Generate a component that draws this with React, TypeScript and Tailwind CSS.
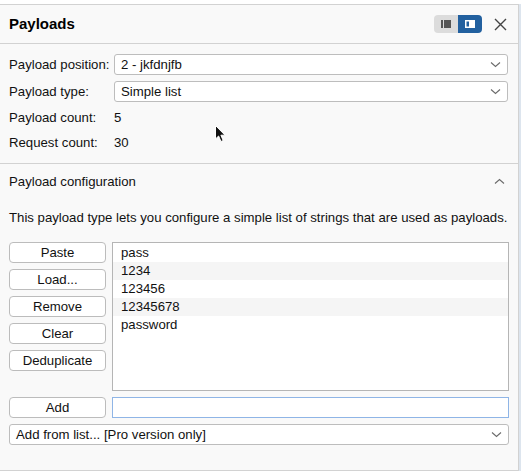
import React from 'react'

const font = "font-['Liberation_Sans',Arial,sans-serif]"

function Chevron({ up = false }: { up?: boolean }) {
  return (
    <svg width="11" height="7" viewBox="0 0 11 7" className={up ? 'rotate-180' : ''}>
      <path d="M1 1.5 L5.5 5.5 L10 1.5" fill="none" stroke="#6b6b6b" strokeWidth="1.1" />
    </svg>
  )
}

function Select({ value, className = '' }: { value: string; className?: string }) {
  return (
    <div className={`flex h-[21px] items-center justify-between rounded-[3px] border border-[#bdbdbd] bg-white pl-[6px] pr-[6px] ${className}`}>
      <span>{value}</span>
      <Chevron />
    </div>
  )
}

function Btn({ label }: { label: string }) {
  return (
    <button className="flex h-[21px] w-[97px] items-center justify-center rounded-[4px] border border-[#bcbcbc] bg-white text-[13.2px] text-[#111]">
      {label}
    </button>
  )
}

export default function App() {
  const items = ['pass', '1234', '123456', '12345678', 'password']

  return (
    <div className={`relative h-[473px] w-[521px] overflow-hidden bg-white pt-[4px] text-[13.2px] text-[#111] ${font}`}>
      <div className="flex h-[467px]">
        <div className="flex w-[519px] flex-col border-t border-r border-b border-[#d2d2d2] bg-[#f9f9f9]">
          {/* header */}
          <div className="flex h-[39px] items-center justify-between border-b border-[#d2d2d2] pl-[9px] pr-[11px]">
            <h1 className="text-[15px] font-bold text-black">Payloads</h1>
            <div className="flex items-center gap-[12px]">
              <div className="flex h-[18px] overflow-hidden rounded-[4px]">
                <div className="flex w-[24px] items-center justify-center bg-[#dcdcdc]">
                  <svg width="10" height="8" viewBox="0 0 10 8">
                    <rect x="0" y="0" width="2" height="8" fill="#555" />
                    <rect x="3" y="0" width="7" height="8" fill="#555" />
                  </svg>
                </div>
                <div className="flex w-[24px] items-center justify-center bg-[#22609f]">
                  <svg width="10" height="8" viewBox="0 0 10 8">
                    <rect x="0.75" y="0.75" width="8.5" height="6.5" fill="none" stroke="#fff" strokeWidth="1.5" />
                    <rect x="4" y="0" width="6" height="8" fill="#fff" />
                  </svg>
                </div>
              </div>
              <svg width="13" height="13" viewBox="0 0 13 13">
                <path d="M1 1 L12 12 M12 1 L1 12" stroke="#444" strokeWidth="1.4" />
              </svg>
            </div>
          </div>

          {/* positions */}
          <div className="flex flex-col border-b border-[#d2d2d2] px-[9px] pt-[10px] pb-[10px]">
            <div className="flex h-[21px] items-center">
              <span className="w-[105px]">Payload position:</span>
              <Select value="2 - jkfdnjfb" className="w-[394px]" />
            </div>
            <div className="mt-[6px] flex h-[21px] items-center">
              <span className="w-[105px]">Payload type:</span>
              <Select value="Simple list" className="w-[394px]" />
            </div>
            <div className="mt-[5px] flex h-[21px] items-center">
              <span className="w-[105px]">Payload count:</span>
              <span>5</span>
            </div>
            <div className="mt-[4px] flex h-[21px] items-center">
              <span className="w-[105px]">Request count:</span>
              <span>30</span>
            </div>
          </div>

          {/* configuration */}
          <div className="flex flex-col px-[9px] pt-[7px]">
            <div className="flex h-[21px] items-center justify-between pr-[4px]">
              <span>Payload configuration</span>
              <Chevron up />
            </div>
            <p className="mt-[18px] leading-[16px]">
              This payload type lets you configure a simple list of strings that are used as payloads.
            </p>
            <div className="mt-[16px] flex gap-[6px]">
              <div className="flex flex-col gap-[6px]">
                <Btn label="Paste" />
                <Btn label="Load..." />
                <Btn label="Remove" />
                <Btn label="Clear" />
                <Btn label="Deduplicate" />
              </div>
              <div className="h-[149px] flex-1 border border-[#b5b5b5] bg-white pt-[1px]">
                {items.map((it, i) => (
                  <div key={it} className={`flex h-[18px] items-center pl-[8px] ${i % 2 === 1 ? 'bg-[#f5f5f5]' : ''}`}>
                    {it}
                  </div>
                ))}
              </div>
            </div>
            <div className="mt-[6px] flex gap-[6px]">
              <Btn label="Add" />
              <div className="h-[21px] flex-1 border border-[#8fb5e6] bg-white" />
            </div>
            <Select value="Add from list... [Pro version only]" className="mt-[6px]" />
          </div>
        </div>
        <div className="w-[2px] bg-[#dde5ee]" />
      </div>

      {/* mouse pointer */}
      <svg className="absolute left-[214px] top-[124px]" width="14" height="20" viewBox="0 0 14 20">
        <path d="M1.5 1.5 L1.5 15 L4.6 12 L7 17.5 L9.2 16.5 L6.9 11.2 L11 11.2 Z" fill="#111" stroke="#fff" strokeWidth="1" />
      </svg>
    </div>
  )
}
